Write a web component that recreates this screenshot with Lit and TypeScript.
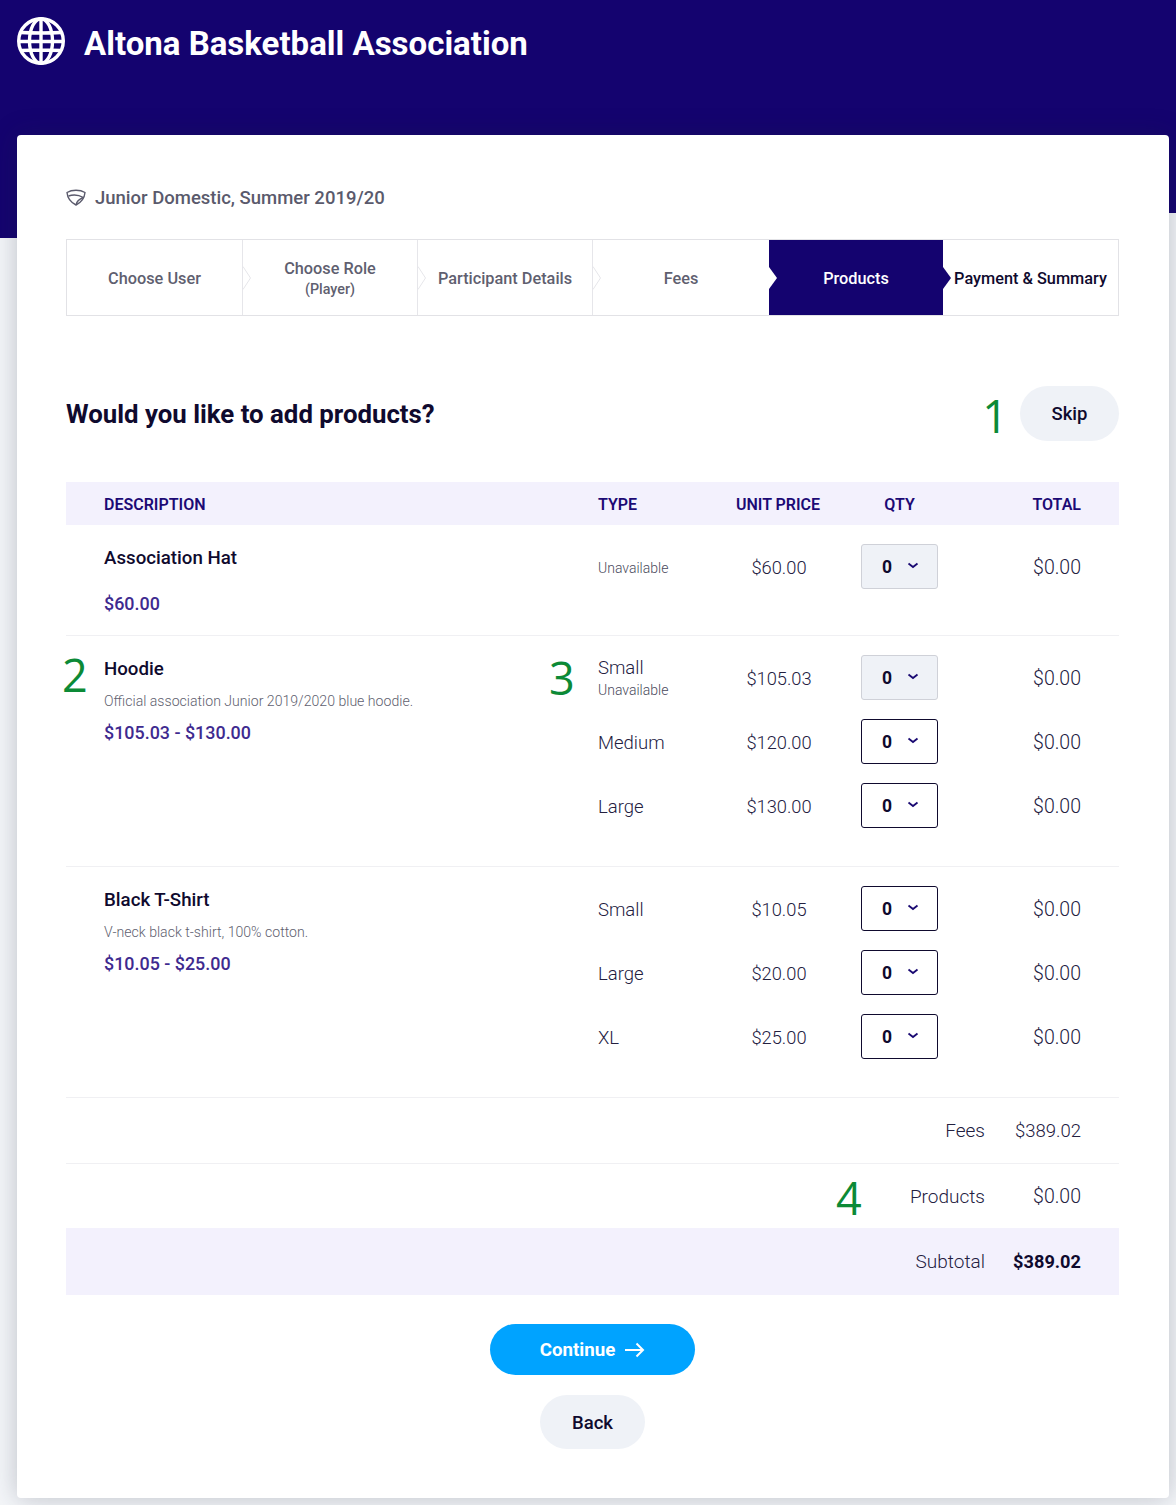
import { LitElement, html, css, svg } from "lit";
import { customElement } from "lit/decorators.js";

interface Variant {
  type: string;
  price: string;
  note?: string;
  off?: boolean;
}
interface Product {
  name: string;
  desc?: string;
  range: string;
  variants: Variant[];
  mark?: string;
  typeMark?: string;
}

const PRODUCTS: Product[] = [
  { name: "Association Hat", range: "$60.00", variants: [{ type: "", note: "Unavailable", price: "$60.00", off: true }] },
  {
    name: "Hoodie",
    desc: "Official association Junior 2019/2020 blue hoodie.",
    range: "$105.03 - $130.00",
    mark: "2",
    typeMark: "3",
    variants: [
      { type: "Small", note: "Unavailable", price: "$105.03", off: true },
      { type: "Medium", price: "$120.00" },
      { type: "Large", price: "$130.00" },
    ],
  },
  {
    name: "Black T-Shirt",
    desc: "V-neck black t-shirt, 100% cotton.",
    range: "$10.05 - $25.00",
    variants: [
      { type: "Small", price: "$10.05" },
      { type: "Large", price: "$20.00" },
      { type: "XL", price: "$25.00" },
    ],
  },
];

const STEPS = [
  { label: "Choose User" },
  { label: "Choose Role", sub: "(Player)" },
  { label: "Participant Details" },
  { label: "Fees" },
  { label: "Products", active: true },
  { label: "Payment & Summary", next: true },
];

const chevronDown = svg`<svg class="caret" width="12" height="7" viewBox="0 0 12 7"><path d="M1.500 1.500L6 5l4.500-3.500" fill="none" stroke="#1a0a72" stroke-width="1.800"/></svg>`;

@customElement("app-root")
export class AppRoot extends LitElement {
  static styles = css`
    :host {
      display: block;
      background: #f4f6f9;
      font-family: Roboto, "Liberation Sans", sans-serif;
      color: #0f0a2e;
    }
    .band {
      background: #14036f;
      height: 238px;
      clip-path: polygon(0 0, 100% 0, 100% 213px, 600px 213px, 600px 238px, 0 238px);
      box-sizing: border-box;
      padding: 17px 17px 0;
      display: flex;
      align-items: flex-start;
      gap: 19px;
    }
    .band h1 {
      margin: 0;
      font-size: 33px;
      line-height: 53px;
      font-weight: 700;
      color: #fff;
      white-space: nowrap;
    }
    .card {
      margin: -103px 7px 0 17px;
      background: #fff;
      border-radius: 4px;
      box-shadow: 0 0 26px rgba(30, 40, 60, 0.26);
      padding: 49px 50px 49px 49px;
      height: 1363px;
      box-sizing: border-box;
      position: relative;
    }
    .season {
      display: flex;
      align-items: center;
      gap: 9px;
      height: 27px;
      font-size: 18.500px;
      font-weight: 500;
      color: #5a5a6c;
    }
    .steps {
      margin-top: 28px;
      display: grid;
      grid-template-columns: 175px 175px 175px 177px 174px 1fr;
      border: 1px solid #e2e2e6;
      height: 77px;
      box-sizing: border-box;
    }
    .step {
      position: relative;
      display: flex;
      flex-direction: column;
      align-items: center;
      justify-content: center;
      padding-top: 1px;
      font-size: 16.300px;
      font-weight: 500;
      color: #5f5f70;
      white-space: nowrap;
      border-left: 1px solid #e6e6ea;
      text-align: center;
    }
    .step:first-child {
      border-left: none;
    }
    .step small {
      font-size: 14.300px;
      line-height: 18px;
      margin-top: 2px;
    }
    .step.active {
      background: #14036f;
      color: #fff;
      border-left: none;
    }
    .step.next {
      color: #0f0a2e;
      border-left: none;
    }
    .notch {
      position: absolute;
      left: 0;
      top: 26px;
      z-index: 1;
    }
    .title {
      margin-top: 70px;
      display: flex;
      align-items: center;
      justify-content: space-between;
      height: 55px;
    }
    .title h2 {
      margin: 0;
      padding-top: 1px;
      font-size: 25.800px;
      font-weight: 700;
      color: #0f0a2e;
    }
    .pill {
      display: inline-flex;
      align-items: center;
      justify-content: center;
      border-radius: 28px;
      background: #eff2f7;
      font-size: 18.500px;
      font-weight: 500;
      color: #0f0a2e;
    }
    .skip {
      width: 99px;
      height: 55px;
    }
    .cols {
      display: grid;
      grid-template-columns: 494px 121px 120px 100px 1fr;
      padding: 0 38px;
    }
    .thead {
      margin-top: 41px;
      height: 43px;
      padding-top: 1px;
      box-sizing: border-box;
      background: #f3f1fd;
      align-items: center;
      font-size: 16px;
      font-weight: 600;
      color: #1c0a75;
    }
    .thead .c {
      text-align: center;
      padding-right: 2px;
    }
    .thead .q {
      margin-left: 22px;
      text-align: center;
      width: 77px;
    }
    .thead .r {
      text-align: right;
    }
    .product {
      border-bottom: 1px solid #f0f0f3;
      padding: 19px 38px 0;
      display: grid;
      grid-template-columns: 494px 1fr;
      position: relative;
    }
    .product .name {
      font-size: 18.700px;
      font-weight: 500;
      line-height: 28px;
    }
    .product .desc {
      font-size: 14.100px;
      font-weight: 300;
      color: #5f5f70;
      line-height: 20px;
      margin-top: 8px;
    }
    .product .range {
      font-size: 17.900px;
      font-weight: 500;
      color: #3e2a8f;
      line-height: 24px;
      margin-top: 10px;
    }
    .product.plain .range {
      margin-top: 20px;
    }
    .vrow {
      display: grid;
      grid-template-columns: 121px 120px 100px 1fr;
      grid-template-rows: 45px;
      height: 45px;
      align-items: center;
      margin-bottom: 19px;
      font-size: 18.300px;
      font-weight: 300;
      color: #23203f;
    }
    .vtype {
      line-height: 20px;
      font-size: 18.500px;
      padding-top: 2px;
    }
    .vtype.two {
      padding-top: 4px;
    }
    .vtype.two small {
      margin-top: 1px;
    }
    .vtype small {
      display: block;
      font-size: 14px;
      line-height: 22px;
      color: #4a4a5c;
    }
    .vprice {
      text-align: center;
      padding-top: 1px;
    }
    .select {
      margin-left: 22px;
      width: 77px;
      height: 45px;
      box-sizing: border-box;
      border: 1px solid #0f0a2e;
      border-radius: 3px;
      display: flex;
      align-items: center;
      gap: 15px;
      padding: 1px 0 0 20px;
      font-size: 17.500px;
      font-weight: 700;
      color: #0f0a2e;
      background: #fff;
    }
    .select.off {
      background: #eff2f7;
      border-color: #cfd1d8;
    }
    .caret {
      margin-top: -3px;
    }
    .vtotal {
      text-align: right;
      font-size: 19.500px;
      padding-top: 1px;
    }
    .sum {
      display: flex;
      justify-content: flex-end;
      align-items: center;
      padding-right: 38px;
      height: 65px;
      border-bottom: 1px solid #f0f0f3;
      font-size: 19px;
      font-weight: 300;
      color: #23203f;
      position: relative;
    }
    .sum.flat {
      height: 64px;
      border-bottom: none;
    }
    .sum .v {
      width: 96px;
      text-align: right;
      font-size: 18.500px;
    }
    .sum.flat .v {
      font-size: 19.500px;
    }
    .sum.tot {
      height: 67px;
      background: #f3f1fd;
      border-bottom: none;
    }
    .sum.tot .v {
      font-weight: 700;
      font-size: 18.200px;
      color: #0f0a2e;
    }
    .actions {
      margin-top: 29px;
      display: flex;
      flex-direction: column;
      align-items: center;
      gap: 20px;
    }
    .continue {
      width: 205px;
      height: 51px;
      background: #00a3ff;
      color: #fff;
      font-weight: 700;
      font-size: 18.700px;
      gap: 10px;
    }
    .back {
      width: 105px;
      height: 54px;
      box-sizing: border-box;
      padding-top: 2px;
    }
    .mark {
      position: absolute;
      font-family: "Open Sans", sans-serif;
      font-weight: 400;
      font-size: 45px;
      line-height: 50px;
      color: #0c8a36;
    }
    .mark.m1 {
      right: 161px;
      top: 256px;
    }
    .mark.m2 {
      left: -4px;
      top: 14px;
    }
    .mark.m3 {
      left: 483px;
      top: 17px;
    }
    .mark.m4 {
      left: 770px;
      top: 9px;
    }
  `;

  private notch(i: number) {
    const step = STEPS[i];
    if (i === 0) return null;
    if (step.active) return svg`<svg class="notch" width="9" height="24" viewBox="0 0 9 24"><path d="M0 1l8 11-8 11z" fill="#fff"/></svg>`;
    if (step.next) return svg`<svg class="notch" width="9" height="24" viewBox="0 0 9 24"><path d="M0 1l8 11-8 11z" fill="#14036f"/></svg>`;
    return svg`<svg class="notch" width="9" height="24" viewBox="0 0 9 24"><path d="M0 0.500l7.500 11.500L0 23.500" fill="#fff" stroke="#e6e6ea"/></svg>`;
  }

  private renderProduct(p: Product) {
    return html`<div class="product ${p.desc ? "" : "plain"}">
      ${p.mark ? html`<div class="mark m2">${p.mark}</div>` : null}
      ${p.typeMark ? html`<div class="mark m3">${p.typeMark}</div>` : null}
      <div>
        <div class="name">${p.name}</div>
        ${p.desc ? html`<div class="desc">${p.desc}</div>` : null}
        <div class="range">${p.range}</div>
      </div>
      <div>
        ${p.variants.map(
          (v) => html`<div class="vrow">
            <div class="vtype ${v.type && v.note ? "two" : ""}">${v.type}${v.note ? html`<small>${v.note}</small>` : null}</div>
            <div class="vprice">${v.price}</div>
            <div><div class="select ${v.off ? "off" : ""}">0 ${chevronDown}</div></div>
            <div class="vtotal">$0.00</div>
          </div>`
        )}
        <div style="height: ${p.variants.length > 1 ? 19 : 27}px"></div>
      </div>
    </div>`;
  }

  render() {
    return html`
      <div class="band">
        <svg width="48" height="48" viewBox="0 0 48 48" fill="none" stroke="#fff" stroke-width="3.400">
          <circle cx="24" cy="24" r="22.300" />
          <ellipse cx="24" cy="24" rx="11.500" ry="22.300" />
          <path d="M24 1.500v45M1.500 24.500h45M4 15.500Q24 16.500 44 15.500M4 33.500Q24 32.500 44 33.500" />
        </svg>
        <h1>Altona Basketball Association</h1>
      </div>
      <div class="card">
        <div class="season">
          <svg width="20" height="17" viewBox="0 0 20 17" fill="none" stroke="#5a5a6c" stroke-width="1.400">
            <path d="M1 3.500C6 .5 14 .5 19 3.500 18.500 9 15 13.500 10 16 5 13.500 1.500 9 1 3.500z" />
            <path d="M2.500 7C8 5 13 6 17.500 8.500M10 16c.5-3 3-6 7.500-7.500" />
          </svg>
          Junior Domestic, Summer 2019/20
        </div>
        <div class="steps">
          ${STEPS.map(
            (s, i) => html`<div class="step ${s.active ? "active" : ""} ${s.next ? "next" : ""}">
              ${this.notch(i)}
              <span>${s.label}</span>
              ${s.sub ? html`<small>${s.sub}</small>` : null}
            </div>`
          )}
        </div>
        <div class="title">
          <h2>Would you like to add products?</h2>
          <div class="mark m1">1</div>
          <div class="pill skip">Skip</div>
        </div>
        <div class="cols thead">
          <div>DESCRIPTION</div>
          <div>TYPE</div>
          <div class="c">UNIT PRICE</div>
          <div class="q">QTY</div>
          <div class="r">TOTAL</div>
        </div>
        ${PRODUCTS.map((p) => this.renderProduct(p))}
        <div class="sum"><span>Fees</span><span class="v">$389.02</span></div>
        <div class="sum flat">
          <div class="mark m4">4</div>
          <span>Products</span><span class="v">$0.00</span>
        </div>
        <div class="sum tot"><span>Subtotal</span><span class="v">$389.02</span></div>
        <div class="actions">
          <div class="pill continue">
            Continue
            <svg width="20" height="16" viewBox="0 0 20 16" fill="none" stroke="#fff" stroke-width="2">
              <path d="M0 8h18M11.500 1.500L18 8l-6.500 6.500" />
            </svg>
          </div>
          <div class="pill back">Back</div>
        </div>
      </div>
      <div style="height: 7px"></div>
    `;
  }
}
